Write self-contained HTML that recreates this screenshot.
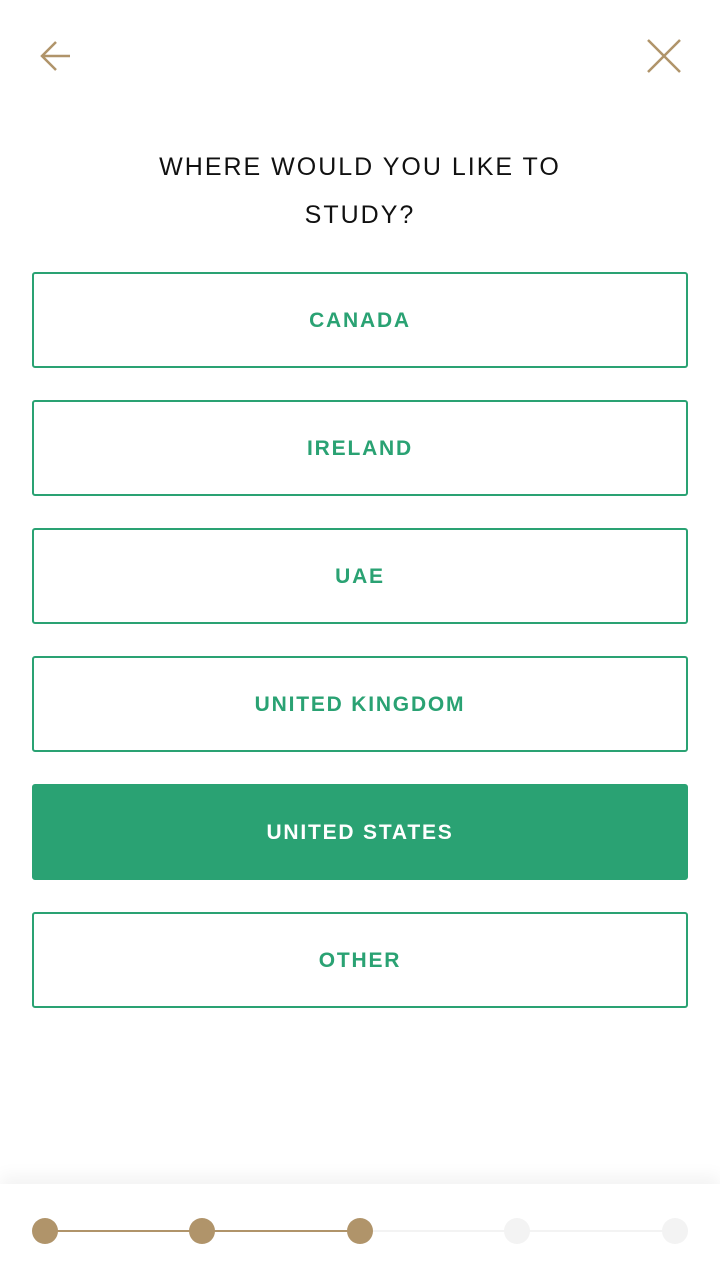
<!DOCTYPE html>
<html><head><style>
body{margin:0;width:720px;height:1280px;background:#fff;position:relative;overflow:hidden;font-family:"Liberation Sans",sans-serif}
.t{position:absolute;top:143px;left:0;width:720px;text-align:center;font-size:25px;letter-spacing:2px;line-height:48px;color:#111}
.b{position:absolute;left:32px;width:652px;height:92px;border:2px solid #2aa273;border-radius:3px;color:#2aa273;font-size:21px;font-weight:bold;letter-spacing:1.8px;text-align:center;line-height:94px}
.s{background:#2aa273;color:#fff}
.f{position:absolute;top:1184px;left:0;width:720px;height:96px;background:#fff;box-shadow:0 -8px 16px rgba(0,0,0,0.05)}
.d{position:absolute;top:34px;width:26px;height:26px;border-radius:50%;background:#b0946a}
.g{background:#f3f3f3}
.l{position:absolute;top:46px;height:2px}
</style></head><body>
<svg style="position:absolute;left:0;top:0" width="720" height="120">
<path d="M70 56H42M56 42L42 56L56 70" fill="none" stroke="#b0946a" stroke-width="2.5"/>
<path d="M648 40L680 72M680 40L648 72" fill="none" stroke="#b0946a" stroke-width="2.5"/>
</svg>
<div class="t">WHERE WOULD YOU LIKE TO<br>STUDY?</div>
<div class="b" style="top:272px">CANADA</div>
<div class="b" style="top:400px">IRELAND</div>
<div class="b" style="top:528px">UAE</div>
<div class="b" style="top:656px">UNITED KINGDOM</div>
<div class="b s" style="top:784px">UNITED STATES</div>
<div class="b" style="top:912px">OTHER</div>
<div class="f">
<div class="l" style="left:45px;width:315px;background:#b0946a"></div>
<div class="l" style="left:360px;width:315px;background:#f3f3f3"></div>
<div class="d" style="left:32px"></div>
<div class="d" style="left:189px"></div>
<div class="d" style="left:347px"></div>
<div class="d g" style="left:504px"></div>
<div class="d g" style="left:662px"></div>
</div>
</body></html>
